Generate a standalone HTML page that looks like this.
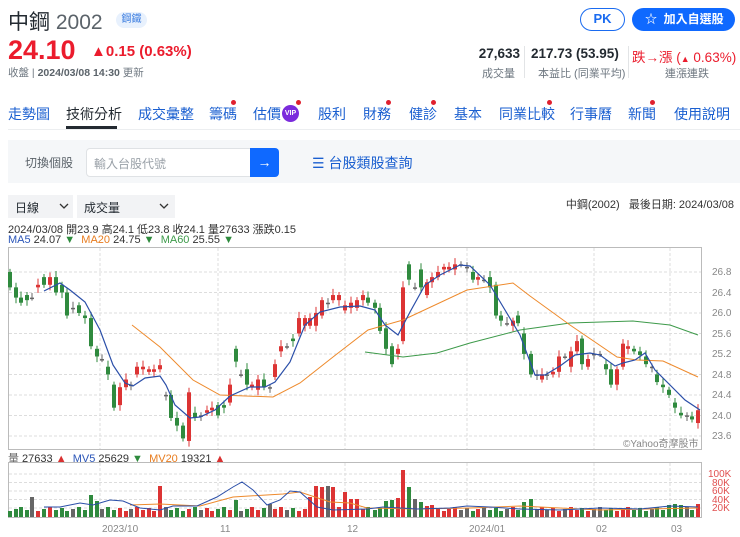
<!DOCTYPE html>
<html><head><meta charset="utf-8">
<style>
*{margin:0;padding:0;box-sizing:border-box}
body{width:740px;height:537px;overflow:hidden;background:#fff;font-family:"Liberation Sans","Noto Sans CJK TC",sans-serif;color:#232a31;position:relative}
.a{position:absolute;white-space:nowrap}
.nav{font-size:14px;color:#1a5fd0;top:104px}
.dot{position:absolute;width:5px;height:5px;border-radius:50%;background:#e0202e}
.lbl{font-size:11px;color:#6e7780}
.chev{position:absolute;top:8px}
</style></head><body>
<div class="a" style="left:8px;top:6px;font-size:21px;color:#232a31">中鋼 <span style="color:#5b636a">2002</span></div>
<div class="a" style="left:116px;top:12px;width:31px;height:16px;border-radius:8px;background:#e8f1fd;color:#3f7fe0;font-size:10px;text-align:center;line-height:16px">鋼鐵</div>
<div class="a" style="left:8px;top:35px;font-size:27px;font-weight:bold;color:#eb1c2d">24.10</div>
<div class="a" style="left:91px;top:43px;font-size:15px;font-weight:bold;color:#eb1c2d">▲0.15 (0.63%)</div>
<div class="a" style="left:8px;top:65px;font-size:10.5px;color:#6e7780">收盤 | <b style="color:#5b636a">2024/03/08 14:30</b> 更新</div>

<div class="a" style="left:580px;top:8px;width:45px;height:23px;border:1.5px solid #1a6bf0;border-radius:12px;color:#1a6bf0;font-weight:bold;font-size:13px;text-align:center;line-height:20px">PK</div>
<div class="a" style="left:632px;top:8px;width:103px;height:23px;background:#0f69ff;border-radius:12px;color:#fff;font-weight:bold;font-size:12px;line-height:23px;padding-left:13px">☆&nbsp; 加入自選股</div>

<div class="a" style="left:470px;top:46px;width:50px;text-align:right;font-size:13.5px;font-weight:bold">27,633</div>
<div class="a lbl" style="left:482px;top:65px">成交量</div>
<div class="a" style="left:524px;top:46px;width:1px;height:32px;background:#e2e4e6"></div>
<div class="a" style="left:531px;top:46px;font-size:13.5px;font-weight:bold">217.73 (53.95)</div>
<div class="a lbl" style="left:538px;top:65px">本益比 (同業平均)</div>
<div class="a" style="left:628px;top:46px;width:1px;height:32px;background:#e2e4e6"></div>
<div class="a" style="left:632px;top:46px;width:103px;text-align:right;font-size:13.5px;color:#eb1c2d">跌→漲 (<span style="font-size:9px">▲</span> 0.63%)</div>
<div class="a lbl" style="left:665px;top:65px">連漲連跌</div>

<div class="a nav" style="left:8px">走勢圖</div>
<div class="a nav" style="left:66px;color:#232a31">技術分析</div>
<div class="a" style="left:66px;top:126px;width:51px;height:3px;background:#232a31"></div>
<div class="a nav" style="left:138px">成交彙整</div>
<div class="a nav" style="left:209px">籌碼</div><div class="dot" style="left:231px;top:100px"></div>
<div class="a nav" style="left:253px">估價</div>
<div class="a" style="left:282px;top:105px;width:17px;height:17px;border-radius:50%;background:#7b2bdc;color:#fff;font-size:7px;font-weight:bold;text-align:center;line-height:17px">VIP</div><div class="dot" style="left:296px;top:100px"></div>
<div class="a nav" style="left:318px">股利</div>
<div class="a nav" style="left:363px">財務</div><div class="dot" style="left:386px;top:100px"></div>
<div class="a nav" style="left:409px">健診</div><div class="dot" style="left:431px;top:100px"></div>
<div class="a nav" style="left:454px">基本</div>
<div class="a nav" style="left:499px">同業比較</div><div class="dot" style="left:547px;top:100px"></div>
<div class="a nav" style="left:570px">行事曆</div>
<div class="a nav" style="left:628px">新聞</div><div class="dot" style="left:650px;top:100px"></div>
<div class="a nav" style="left:674px">使用說明</div>
<div class="a" style="left:8px;top:129px;width:732px;height:1px;background:#eceef0"></div>

<div class="a" style="left:8px;top:140px;width:732px;height:43px;background:#f5f7f9"></div>
<div class="a" style="left:25px;top:154px;font-size:12px;color:#5b636a">切換個股</div>
<div class="a" style="left:86px;top:148px;width:165px;height:29px;background:#fff;border:1px solid #dfe2e5;border-radius:4px 0 0 4px;font-size:12px;color:#9aa1a8;padding:6px 0 0 7px">輸入台股代號</div>
<div class="a" style="left:250px;top:148px;width:29px;height:29px;background:#0f69ff;border-radius:0 4px 4px 0;color:#fff;font-size:14px;text-align:center;line-height:28px">→</div>
<div class="a" style="left:312px;top:153px;font-size:14px;color:#1a5fd0">☰ 台股類股查詢</div>

<div class="a" style="left:8px;top:195px;width:65px;height:23px;background:#f2f3f5;font-size:12px;padding:4px 0 0 7px">日線<svg class="chev" style="left:51px" width="10" height="7"><polyline points="1,1 5,5 9,1" fill="none" stroke="#333" stroke-width="1.3"/></svg></div>
<div class="a" style="left:77px;top:195px;width:98px;height:23px;background:#f2f3f5;font-size:12px;padding:4px 0 0 7px">成交量<svg class="chev" style="left:82px" width="10" height="7"><polyline points="1,1 5,5 9,1" fill="none" stroke="#333" stroke-width="1.3"/></svg></div>
<div class="a" style="right:6px;top:196px;font-size:11px;color:#333">中鋼(2002)&nbsp;&nbsp; 最後日期: 2024/03/08</div>
<div class="a" style="left:8px;top:221px;font-size:11px;color:#333">2024/03/08 開23.9 高24.1 低23.8 收24.1 量27633 漲跌0.15</div>
<div class="a" style="left:8px;top:234px;font-size:11px;color:#333"><span style="color:#2a55b8">MA5</span> 24.07 <span style="color:#2e8b3d">▼</span>&nbsp; <span style="color:#e87c1e">MA20</span> 24.75 <span style="color:#2e8b3d">▼</span>&nbsp; <span style="color:#3d9a4a">MA60</span> 25.55 <span style="color:#2e8b3d">▼</span></div>
<div class="a" style="left:8px;top:450px;font-size:11px;color:#333"><span style="color:#666">量</span> 27633 <span style="color:#d93030">▲</span>&nbsp; <span style="color:#2a55b8">MV5</span> 25629 <span style="color:#2e8b3d">▼</span>&nbsp; <span style="color:#e87c1e">MV20</span> 19321 <span style="color:#d93030">▲</span></div>

<svg id="c" class="a" style="left:0;top:0" width="740" height="537" xmlns="http://www.w3.org/2000/svg">
<g font-family="Liberation Sans,sans-serif" font-size="10" fill="#888">
<text x="712" y="275">26.8</text><text x="712" y="296">26.4</text><text x="712" y="316">26.0</text><text x="712" y="337">25.6</text><text x="712" y="357">25.2</text><text x="712" y="378">24.8</text><text x="712" y="398">24.4</text><text x="712" y="419">24.0</text><text x="712" y="439">23.6</text>
<text x="102" y="532">2023/10</text><text x="220" y="532">11</text><text x="347" y="532">12</text><text x="469" y="532">2024/01</text><text x="596" y="532">02</text><text x="671" y="532">03</text>
<text x="623" y="447" font-size="10">©Yahoo奇摩股市</text>
<g fill="#e05050"><text x="708" y="477">100K</text><text x="712" y="486">80K</text><text x="712" y="494">60K</text><text x="712" y="503">40K</text><text x="712" y="511">20K</text></g>
</g>
<g id="grid" stroke="#ddd" stroke-dasharray="3,2" fill="none"></g>
<rect x="8.5" y="247.5" width="693" height="202" fill="none" stroke="#bbb"/>
<rect x="8.5" y="462.5" width="693" height="55" fill="none" stroke="#bbb"/>
<g id="cd"></g>
<polyline fill="none" stroke="#3d9a4a" stroke-width="1" points="365,352 403,357 437,353 470,343 520,330 570,323 633,321 670,325 698,335"/>
<polyline fill="none" stroke="#ee8a2c" stroke-width="1" points="132,325 160,347 193,380 220,395 273,397 300,383 333,357 368,330 403,320 467,290 513,283 530,296 570,325 617,357 637,360 663,361 698,377"/>
<polyline fill="none" stroke="#2a4ea8" stroke-width="1.2" points="44,291 60,283 70,290 85,302 100,330 113,365 125,383 133,386 145,378 160,376 166,385 175,405 190,418 200,417 215,410 230,396 250,387 265,387 275,382 290,362 305,325 320,312 340,307 360,306 375,310 385,325 398,335 410,312 425,285 440,275 460,265 470,266 490,285 505,310 520,335 535,375 545,375 560,366 575,355 590,353 600,355 615,366 623,363 635,360 645,353 655,370 670,385 685,400 700,410"/>
<polyline fill="none" stroke="#ee8a2c" stroke-width="1" points="130,505 160,504 200,506 233,497 283,494 300,492 330,502 350,503 367,508 417,509 470,508 520,506 600,510 698,508"/>
<polyline fill="none" stroke="#2a4ea8" stroke-width="1" points="44,507 60,507 80,503 93,505 110,500 123,501 140,508 160,510 173,506 197,506 217,497 233,487 242,482 253,490 267,505 280,500 290,491 300,492 317,507 333,510 367,509 383,507 417,509 450,508 467,506 490,507 520,509 560,510 600,508 640,509 670,506 698,507"/>
</svg>
<script>
var D="10,26.8,26.5;16,26.5,26.3;21,26.3,26.2;27,26.35,26.25;32,26.3,26.3;38,26.5,26.55;44,26.7,26.55;50,26.55,26.7;56,26.7,26.4;62,26.55,26.4;67,26.4,25.95;73,26.1,26.1;79,26.15,26.0;85,25.95,25.9;91,25.9,25.35;97,25.3,25.15;102,25.1,25.1;108,24.95,24.8;114,24.6,24.15;120,24.2,24.55;126,24.55,24.7;131,24.6,24.6;137,24.8,24.95;143,24.9,24.95;149,24.85,24.9;154,24.85,24.9;160,24.9,24.98;166,24.4,24.4;171,24.4,23.95;177,23.95,23.8;183,23.8,23.55;189,23.5,24.45;195,24.05,23.95;201,24.0,24.0;207,24.05,24.1;212,24.1,24.15;218,24.2,24.0;224,24.2,24.15;230,24.25,24.6;236,25.3,25.05;241,24.8,24.8;247,24.9,24.6;252,24.55,24.6;258,24.5,24.7;264,24.7,24.55;270,24.55,24.55;275,24.75,25.0;281,25.25,25.35;287,25.35,25.35;293,25.5,25.45;299,25.6,25.9;305,25.75,25.9;310,25.75,25.9;316,25.75,26.0;322,25.95,26.25;328,26.2,26.2;333,26.25,26.35;339,26.25,26.35;345,26.05,26.15;351,26.1,26.2;357,26.1,26.25;363,26.25,26.35;368,26.3,26.2;375,26.2,26.1;380,26.1,25.65;386,25.7,25.3;392,25.35,25.0;398,25.2,25.3;403,25.45,26.5;409,26.95,26.65;415,26.5,26.5;421,26.85,26.5;427,26.35,26.6;432,26.6,26.7;438,26.7,26.8;444,26.85,26.9;449,26.85,26.9;455,26.85,26.95;461,26.95,26.95;467,26.9,26.9;473,26.8,26.65;478,26.65,26.7;484,26.65,26.65;490,26.7,26.5;496,26.55,25.95;501,25.95,25.85;507,25.8,25.8;513,25.75,25.85;518,25.95,25.8;524,25.6,25.2;531,25.2,24.8;537,24.8,24.8;542,24.7,24.8;547,24.8,24.8;553,24.8,24.85;559,24.85,25.15;565,25.15,25.15;571,24.95,25.25;577,25.25,25.45;582,25.5,25.0;588,24.95,25.1;594,25.2,25.2;600,25.2,25.2;606,25.0,24.9;611,24.9,24.6;617,24.6,24.9;623,24.95,25.4;628,25.3,25.35;634,25.3,25.25;640,25.25,25.18;646,25.15,25.0;652,24.95,24.95;657,24.8,24.65;663,24.6,24.55;669,24.5,24.4;675,24.25,24.15;681,24.05,24.0;687,24.0,24.0;692,23.98,23.92;698,23.85,24.1";
var V={32:20,45:20,91:22,97:16,110:14,130:14,160:31,173:18,190:14,236:17,270:13,300:23,310:20,316:31,322:30,328:31,333:30,340:51,345:25,351:18,357:18,386:16,392:17,398:19,403:47,409:30,415:18,421:15,427:11,432:12,524:15,531:18,669:12,675:13,681:12,698:13};
var y=function(p){return 272+(26.8-p)*51.2};
var s="",vs="",i=0;
D.split(";").forEach(function(r){var a=r.split(",").map(Number),x=a[0],o=a[1],c=a[2];
var col=c>o?"#dc3434":(c<o?"#2f8a3e":"#666");var hi=Math.max(o,c)+0.06+(i%3)*0.03,lo=Math.min(o,c)-0.06-(i%2)*0.05;
s+='<line x1="'+x+'" x2="'+x+'" y1="'+y(hi)+'" y2="'+y(lo)+'" stroke="'+col+'"/>';
var t=y(Math.max(o,c)),h=Math.max(1.5,Math.abs(y(o)-y(c)));
s+='<rect x="'+(x-2)+'" y="'+t+'" width="4" height="'+h+'" fill="'+col+'"/>';
var vh=V[x]||(6+(i*7)%5);
vs+='<rect x="'+(x-2)+'" y="'+(517-vh)+'" width="4" height="'+vh+'" fill="'+col+'"/>';i++;});
document.getElementById("cd").innerHTML=s+vs;
var g="";[272,292.5,313,333.5,354,374.5,395,415.5,436,474,482.5,491,499.5,508].forEach(function(v){g+='<line x1="9" x2="701" y1="'+v+'" y2="'+v+'"/>';});
[100,218,345,467,594,670].forEach(function(v){g+='<line x1="'+v+'" x2="'+v+'" y1="248" y2="449"/><line x1="'+v+'" x2="'+v+'" y1="463" y2="517"/>';});
document.getElementById("grid").innerHTML=g;
</script>
</body></html>
